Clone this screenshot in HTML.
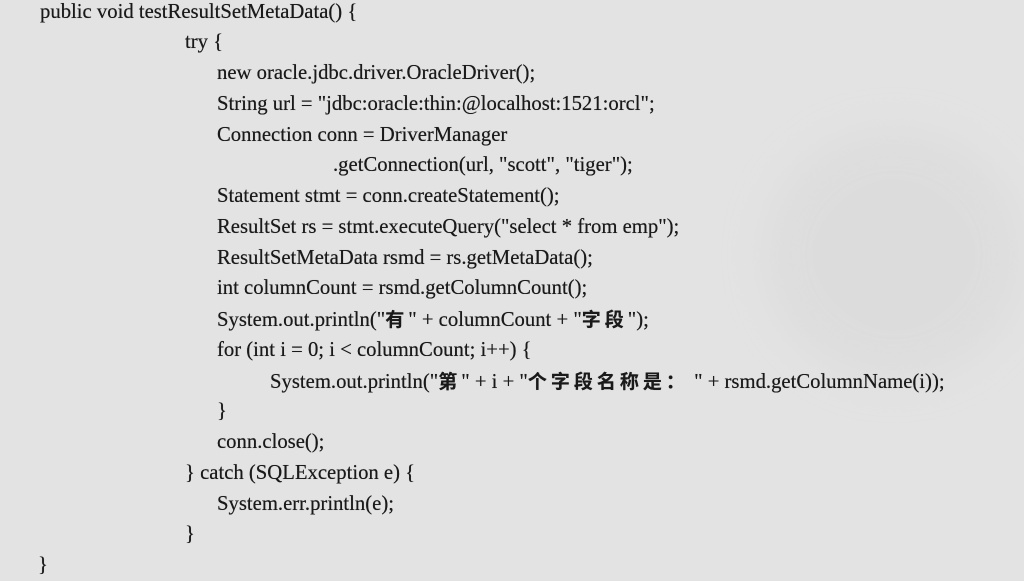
<!DOCTYPE html>
<html><head><meta charset="utf-8"><style>
html,body{margin:0;padding:0;}
body{width:1024px;height:575px;overflow:hidden;background:#e3e3e3;position:relative;
font-family:"Liberation Serif","Noto Serif CJK SC",serif;font-size:20.7px;color:#1a1a1a;text-shadow:0 0 0.4px #1a1a1a;}
.c{position:absolute;left:0;top:-3.5px;line-height:30.75px;}
.c div{height:30.75px;white-space:pre;}
.k{letter-spacing:4px;font-family:"Noto Sans CJK SC",sans-serif;font-weight:bold;font-size:19px;}
.b{position:absolute;right:0;top:130px;width:260px;height:250px;border-radius:50%;background:#d9d9d9;opacity:.6;filter:blur(20px);}
</style></head><body>
<div class="b"></div>
<div class="c"><div style="padding-left:40px">public void testResultSetMetaData() {</div><div style="padding-left:185px">try {</div><div style="padding-left:217px">new oracle.jdbc.driver.OracleDriver();</div><div style="padding-left:217px">String url = "jdbc:oracle:thin:@localhost:1521:orcl";</div><div style="padding-left:217px">Connection conn = DriverManager</div><div style="padding-left:333px">.getConnection(url, "scott", "tiger");</div><div style="padding-left:217px">Statement stmt = conn.createStatement();</div><div style="padding-left:217px">ResultSet rs = stmt.executeQuery("select * from emp");</div><div style="padding-left:217px">ResultSetMetaData rsmd = rs.getMetaData();</div><div style="padding-left:217px">int columnCount = rsmd.getColumnCount();</div><div style="padding-left:217px">System.out.println("<span class="k">有</span>" + columnCount + "<span class="k">字段</span>");</div><div style="padding-left:217px">for (int i = 0; i &lt; columnCount; i++) {</div><div style="padding-left:270px">System.out.println("<span class="k">第</span>" + i + "<span class="k">个字段名称是：</span> " + rsmd.getColumnName(i));</div><div style="padding-left:217px">}</div><div style="padding-left:217px">conn.close();</div><div style="padding-left:185px">} catch (SQLException e) {</div><div style="padding-left:217px">System.err.println(e);</div><div style="padding-left:185px">}</div><div style="padding-left:38px">}</div></div>
</body></html>
